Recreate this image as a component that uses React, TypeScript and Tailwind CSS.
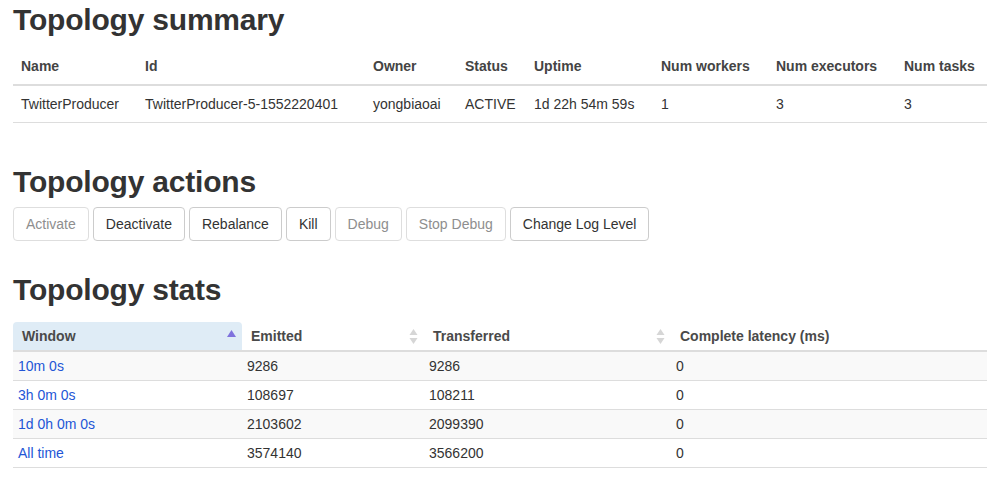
import React from "react";

const summaryCols = [
  { label: "Name", w: "w-[124px]" },
  { label: "Id", w: "w-[228px]" },
  { label: "Owner", w: "w-[92px]" },
  { label: "Status", w: "w-[69px]" },
  { label: "Uptime", w: "w-[127px]" },
  { label: "Num workers", w: "w-[115px]" },
  { label: "Num executors", w: "w-[128px]" },
  { label: "Num tasks", w: "w-[91px]" },
];

const summaryRow = [
  "TwitterProducer",
  "TwitterProducer-5-1552220401",
  "yongbiaoai",
  "ACTIVE",
  "1d 22h 54m 59s",
  "1",
  "3",
  "3",
];

const buttons: { label: string; disabled?: boolean }[] = [
  { label: "Activate", disabled: true },
  { label: "Deactivate" },
  { label: "Rebalance" },
  { label: "Kill" },
  { label: "Debug", disabled: true },
  { label: "Stop Debug", disabled: true },
  { label: "Change Log Level" },
];

const statsRows = [
  ["10m 0s", "9286", "9286", "0"],
  ["3h 0m 0s", "108697", "108211", "0"],
  ["1d 0h 0m 0s", "2103602", "2099390", "0"],
  ["All time", "3574140", "3566200", "0"],
];

function SortAsc() {
  return (
    <svg width="9" height="7" viewBox="0 0 9 7" className="absolute right-[6px] top-[8px]">
      <polygon points="4.5,0 9,7 0,7" fill="#7f72dd" />
    </svg>
  );
}

function SortBoth() {
  return (
    <svg width="9" height="16" viewBox="0 0 9 16" className="absolute right-[6px] top-[7px]">
      <polygon points="4.5,0 8.5,6 0.5,6" fill="#d6d6d6" />
      <polygon points="0.5,9 8.5,9 4.5,15" fill="#d6d6d6" />
    </svg>
  );
}

export default function App() {
  return (
    <div
      className="min-h-[489px] bg-white pl-[13px] text-[14px] leading-[20px] text-[#333]"
      style={{ fontFamily: '"Liberation Sans", Arial, Helvetica, sans-serif' }}
    >
      <h2 className="pt-[3px] text-[30px] font-bold leading-[33px] tracking-[-0.2px] text-[#333]">
        Topology summary
      </h2>
      <table className="mt-[12px] w-full table-fixed border-collapse">
        <colgroup>
          {summaryCols.map((c) => (
            <col key={c.label} className={c.w} />
          ))}
        </colgroup>
        <thead>
          <tr>
            {summaryCols.map((c) => (
              <th
                key={c.label}
                className="border-b-2 border-[#ddd] p-[8px] text-left font-bold whitespace-nowrap text-[#444]"
              >
                {c.label}
              </th>
            ))}
          </tr>
        </thead>
        <tbody>
          <tr>
            {summaryRow.map((v, i) => (
              <td key={i} className="border-b border-[#ddd] p-[8px] whitespace-nowrap">
                {v}
              </td>
            ))}
          </tr>
        </tbody>
      </table>

      <h2 className="mt-[42px] text-[30px] font-bold leading-[33px] tracking-[-0.2px] text-[#333]">
        Topology actions
      </h2>
      <div className="mt-[9px] flex gap-[4px]">
        {buttons.map((b) => (
          <button
            key={b.label}
            disabled={b.disabled}
            className={
              "h-[34px] rounded-[4px] border px-[12px] py-[6px] text-[14px] leading-[20px] whitespace-nowrap bg-white " +
              (b.disabled ? "border-[#dedede] text-[#8e8e8e]" : "border-[#ccc] text-[#333]")
            }
          >
            {b.label}
          </button>
        ))}
      </div>

      <h2 className="mt-[32px] text-[30px] font-bold leading-[33px] tracking-[-0.2px] text-[#333]">
        Topology stats
      </h2>
      <table className="mt-[16px] w-full table-fixed border-collapse">
        <colgroup>
          <col className="w-[229px]" />
          <col className="w-[182px]" />
          <col className="w-[247px]" />
          <col className="w-[316px]" />
        </colgroup>
        <thead>
          <tr>
            <th className="relative rounded-t-[4px] border-b-2 border-[#ddd] bg-[#dfecf6] py-[4px] pl-[9px] text-left font-bold text-[#4a4a4a]">
              Window
              <SortAsc />
            </th>
            <th className="relative border-b-2 border-[#ddd] py-[4px] pl-[9px] text-left font-bold text-[#4a4a4a]">
              Emitted
              <SortBoth />
            </th>
            <th className="relative border-b-2 border-[#ddd] py-[4px] pl-[9px] text-left font-bold text-[#4a4a4a]">
              Transferred
              <SortBoth />
            </th>
            <th className="border-b-2 border-[#ddd] py-[4px] pl-[9px] text-left font-bold text-[#4a4a4a]">
              Complete latency (ms)
            </th>
          </tr>
        </thead>
        <tbody>
          {statsRows.map((r, i) => (
            <tr key={i} className={i % 2 === 0 ? "bg-[#f9f9f9]" : "bg-white"}>
              <td className="border-b border-[#ddd] py-[4px] pl-[5px]">
                <a href="#" className="text-[#2356d6]">
                  {r[0]}
                </a>
              </td>
              <td className="border-b border-[#ddd] py-[4px] pl-[5px]">{r[1]}</td>
              <td className="border-b border-[#ddd] py-[4px] pl-[5px]">{r[2]}</td>
              <td className="border-b border-[#ddd] py-[4px] pl-[5px]">{r[3]}</td>
            </tr>
          ))}
        </tbody>
      </table>
    </div>
  );
}
